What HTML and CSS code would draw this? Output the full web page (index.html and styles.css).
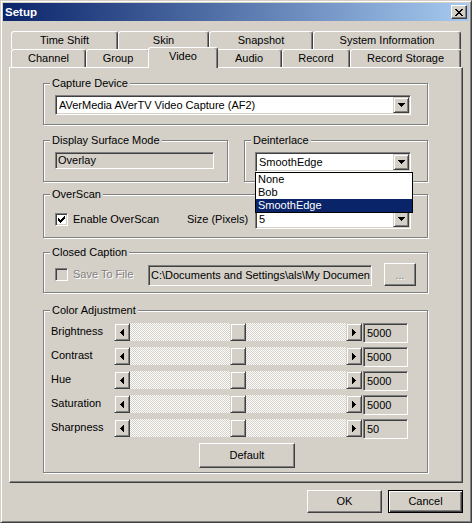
FILE: index.html
```html
<!DOCTYPE html>
<html>
<head>
<meta charset="utf-8">
<title>Setup</title>
<link rel="stylesheet" href="styles.css">
</head>
<body>
<div class="window">
  <div class="titlebar">
    <span class="title">Setup</span>
    <span class="close"><svg width="8" height="7" viewBox="0 0 8 7"><path d="M0 0h2v1H0zM6 0h2v1H6zM1 1h2v1H1zM5 1h2v1H5zM2 2h4v1H2zM3 3h2v1H3zM2 4h4v1H2zM1 5h2v1H1zM5 5h2v1H5zM0 6h2v1H0zM6 6h2v1H6z"/></svg></span>
  </div>

  <div class="tabs">
    <div class="tabrow">
      <div class="tab t-timeshift">Time Shift</div>
      <div class="tab t-skin">Skin</div>
      <div class="tab t-snapshot">Snapshot</div>
      <div class="tab t-sysinfo">System Information</div>
    </div>
    <div class="tabrow">
      <div class="tab t-channel">Channel</div>
      <div class="tab t-group">Group</div>
      <div class="tab t-video sel">Video</div>
      <div class="tab t-audio">Audio</div>
      <div class="tab t-record">Record</div>
      <div class="tab t-storage">Record Storage</div>
    </div>
  </div>

  <div class="panel">
    <div class="group g-capture">
      <div class="legend">Capture Device</div>
      <div class="combo sunk c-capture">
        <span class="ctext">AVerMedia AVerTV Video Capture (AF2)</span>
        <span class="dbtn raised"><svg width="7" height="4" viewBox="0 0 7 4"><path d="M0 0h7v1H0zM1 1h5v1H1zM2 2h3v1H2zM3 3h1v1H3z"/></svg></span>
      </div>
    </div>

    <div class="row2">
      <div class="group g-dsm">
        <div class="legend">Display Surface Mode</div>
        <div class="field sunk f-overlay">Overlay</div>
      </div>
      <div class="group g-deint">
        <div class="legend">Deinterlace</div>
        <div class="combo sunk c-deint">
          <span class="ctext">SmoothEdge</span>
          <span class="dbtn raised"><svg width="7" height="4" viewBox="0 0 7 4"><path d="M0 0h7v1H0zM1 1h5v1H1zM2 2h3v1H2zM3 3h1v1H3z"/></svg></span>
          <div class="list">
            <div class="item">None</div>
            <div class="item">Bob</div>
            <div class="item hl">SmoothEdge</div>
          </div>
        </div>
      </div>
    </div>

    <div class="group g-overscan">
      <div class="legend">OverScan</div>
      <div class="os-row">
        <label class="chk-label l-enable">
          <span class="chk sunk"><svg width="7" height="7" viewBox="0 0 7 7"><path d="M6 0h1v1H6zM5 1h2v1H5zM0 2h1v1H0zM4 2h3v1H4zM0 3h2v1H0zM3 3h3v1H3zM0 4h5v1H0zM1 5h3v1H1zM2 6h1v1H2z"/></svg></span>
          <span>Enable OverScan</span>
        </label>
        <span class="size-label">Size (Pixels)</span>
        <div class="combo sunk c-size">
          <span class="ctext">5</span>
          <span class="dbtn raised"><svg width="7" height="4" viewBox="0 0 7 4"><path d="M0 0h7v1H0zM1 1h5v1H1zM2 2h3v1H2zM3 3h1v1H3z"/></svg></span>
        </div>
      </div>
    </div>

    <div class="group g-cc">
      <div class="legend">Closed Caption</div>
      <div class="cc-row">
        <label class="chk-label l-save disabled">
          <span class="chk sunk off"></span>
          <span>Save To File</span>
        </label>
        <div class="field sunk f-path">C:\Documents and Settings\als\My Documen</div>
        <div class="btn b-browse disabled">...</div>
      </div>
    </div>

    <div class="group g-color">
      <div class="legend">Color Adjustment</div>
      <div class="sliders">
        <div class="srow">
          <span class="slabel">Brightness</span>
          <div class="sbar">
            <span class="sbtn raised"><svg width="4" height="7" viewBox="0 0 4 7"><path d="M3 0h1v7H3zM2 1h1v5H2zM1 2h1v3H1zM0 3h1v1H0z"/></svg></span>
            <span class="track"><span class="thumb raised"></span></span>
            <span class="sbtn raised"><svg width="4" height="7" viewBox="0 0 4 7"><path d="M0 0h1v7H0zM1 1h1v5H1zM2 2h1v3H2zM3 3h1v1H3z"/></svg></span>
          </div>
          <div class="field sunk val">5000</div>
        </div>
        <div class="srow">
          <span class="slabel">Contrast</span>
          <div class="sbar">
            <span class="sbtn raised"><svg width="4" height="7" viewBox="0 0 4 7"><path d="M3 0h1v7H3zM2 1h1v5H2zM1 2h1v3H1zM0 3h1v1H0z"/></svg></span>
            <span class="track"><span class="thumb raised"></span></span>
            <span class="sbtn raised"><svg width="4" height="7" viewBox="0 0 4 7"><path d="M0 0h1v7H0zM1 1h1v5H1zM2 2h1v3H2zM3 3h1v1H3z"/></svg></span>
          </div>
          <div class="field sunk val">5000</div>
        </div>
        <div class="srow">
          <span class="slabel">Hue</span>
          <div class="sbar">
            <span class="sbtn raised"><svg width="4" height="7" viewBox="0 0 4 7"><path d="M3 0h1v7H3zM2 1h1v5H2zM1 2h1v3H1zM0 3h1v1H0z"/></svg></span>
            <span class="track"><span class="thumb raised"></span></span>
            <span class="sbtn raised"><svg width="4" height="7" viewBox="0 0 4 7"><path d="M0 0h1v7H0zM1 1h1v5H1zM2 2h1v3H2zM3 3h1v1H3z"/></svg></span>
          </div>
          <div class="field sunk val">5000</div>
        </div>
        <div class="srow">
          <span class="slabel">Saturation</span>
          <div class="sbar">
            <span class="sbtn raised"><svg width="4" height="7" viewBox="0 0 4 7"><path d="M3 0h1v7H3zM2 1h1v5H2zM1 2h1v3H1zM0 3h1v1H0z"/></svg></span>
            <span class="track"><span class="thumb raised"></span></span>
            <span class="sbtn raised"><svg width="4" height="7" viewBox="0 0 4 7"><path d="M0 0h1v7H0zM1 1h1v5H1zM2 2h1v3H2zM3 3h1v1H3z"/></svg></span>
          </div>
          <div class="field sunk val">5000</div>
        </div>
        <div class="srow">
          <span class="slabel">Sharpness</span>
          <div class="sbar">
            <span class="sbtn raised"><svg width="4" height="7" viewBox="0 0 4 7"><path d="M3 0h1v7H3zM2 1h1v5H2zM1 2h1v3H1zM0 3h1v1H0z"/></svg></span>
            <span class="track"><span class="thumb raised"></span></span>
            <span class="sbtn raised"><svg width="4" height="7" viewBox="0 0 4 7"><path d="M0 0h1v7H0zM1 1h1v5H1zM2 2h1v3H2zM3 3h1v1H3z"/></svg></span>
          </div>
          <div class="field sunk val">50</div>
        </div>
      </div>
      <div class="btn b-default">Default</div>
    </div>
  </div>

  <div class="buttons">
    <div class="btn b-ok">OK</div>
    <div class="btn b-cancel">Cancel</div>
  </div>
</div>
</body>
</html>
```

FILE: styles.css
```css
* { box-sizing: border-box; }
html, body { margin: 0; padding: 0; }
body {
  width: 472px;
  height: 523px;
  overflow: hidden;
  background: #d4d0c8;
  font: 11px/13px "Liberation Sans", Arial, sans-serif;
  color: #000;
}

.window {
  width: 472px;
  height: 523px;
  padding: 2px;
  background: #d4d0c8;
  border: 1px solid;
  border-color: #d4d0c8 #404040 #404040 #d4d0c8;
  box-shadow: inset 1px 1px #fff, inset -1px -1px #808080;
}

/* title bar */
.titlebar {
  height: 18px;
  padding: 0 2px;
  display: flex;
  align-items: center;
  justify-content: space-between;
  background: linear-gradient(to right, #0a246a, #a6caf0);
}
.title {
  color: #fff;
  font-weight: bold;
  font-size: 11.5px;
}
.close {
  width: 16px;
  height: 14px;
  display: flex;
  align-items: center;
  justify-content: center;
  background: #d4d0c8;
  border: 1px solid;
  border-color: #fff #404040 #404040 #fff;
  box-shadow: inset -1px -1px #808080;
}
.close svg { display: block; }

/* tabs */
.tabs {
  width: 450px;
  margin: 10px 0 0 8px;
}
.tabrow {
  display: flex;
  height: 18px;
}
.tab {
  flex: none;
  height: 18px;
  padding-top: 1px;
  line-height: 15px;
  text-align: center;
  white-space: nowrap;
  background: #d4d0c8;
  border: 1px solid;
  border-bottom: 0;
  border-color: #fff #404040 transparent #fff;
  border-radius: 3px 3px 0 0;
  box-shadow: inset -1px 0 #808080;
}
.t-timeshift { width: 107px; }
.t-skin { width: 91px; }
.t-snapshot { width: 104px; }
.t-sysinfo { width: 148px; }
.t-channel { width: 75px; }
.t-group { width: 64px; }
.t-video { width: 66px; }
.t-audio { width: 66px; }
.t-record { width: 68px; }
.t-storage { width: 111px; }
.tab.sel {
  width: 70px;
  height: 21px;
  margin: -2px -2px -1px;
  position: relative;
  z-index: 2;
}

/* panel */
.panel {
  width: 454px;
  height: 416px;
  margin-left: 6px;
  padding-left: 33px;
  border: 1px solid;
  border-color: #fff #404040 #404040 #fff;
  box-shadow: inset -1px -1px #808080;
}

/* group boxes */
.group {
  width: 385px;
  padding: 0 11px;
  border: 1px solid #808080;
  box-shadow: inset 1px 1px #fff, 1px 1px #fff;
}
.legend {
  width: max-content;
  margin: -7px 0 0 -5px;
  padding: 0 2px;
  line-height: 13px;
  background: #d4d0c8;
}

/* 3D styles */
.sunk {
  border: 1px solid;
  border-color: #808080 #fff #fff #808080;
  box-shadow: inset 1px 1px #404040, inset -1px -1px #d4d0c8;
}
.raised {
  background: #d4d0c8;
  border: 1px solid;
  border-color: #d4d0c8 #404040 #404040 #d4d0c8;
  box-shadow: inset 1px 1px #fff, inset -1px -1px #808080;
}

/* combo */
.combo {
  height: 20px;
  padding: 1px 1px 1px 1px;
  display: flex;
  align-items: center;
  background: #fff;
  position: relative;
}
.ctext {
  flex: 1;
  padding-left: 2px;
  white-space: nowrap;
  overflow: hidden;
}
.dbtn {
  flex: none;
  width: 16px;
  height: 16px;
  display: flex;
  align-items: center;
  justify-content: center;
}
.dbtn svg { display: block; }

.list {
  position: absolute;
  left: -1px;
  top: 19px;
  width: 158px;
  background: #fff;
  border: 1px solid #000;
  z-index: 5;
}
.item {
  height: 13px;
  line-height: 13px;
  padding-left: 2px;
}
.item.hl {
  background: #0a246a;
  color: #fff;
}

.field {
  background: #d4d0c8;
  padding-left: 2px;
  white-space: nowrap;
  overflow: hidden;
  display: flex;
  align-items: center;
}

/* capture device */
.g-capture {
  height: 42px;
  margin-top: 15px;
}
.c-capture {
  width: 356px;
  margin-top: 5px;
}

/* display surface / deinterlace */
.row2 {
  display: flex;
  gap: 16px;
  margin-top: 15px;
}
.g-dsm {
  width: 185px;
  height: 42px;
}
.f-overlay {
  width: 159px;
  height: 17px;
  margin-top: 5px;
}
.g-deint {
  width: 184px;
  height: 42px;
  padding-left: 10px;
}
.g-deint .legend { margin-left: -4px; }
.c-deint {
  width: 156px;
  margin-top: 5px;
}

/* overscan */
.g-overscan {
  height: 44px;
  margin-top: 12px;
}
.os-row {
  height: 20px;
  margin-top: 8px;
  display: flex;
  align-items: center;
}
.chk-label {
  flex: none;
  display: flex;
  align-items: center;
}
.l-enable { width: 132px; }
.chk {
  flex: none;
  width: 13px;
  height: 13px;
  margin-right: 5px;
  background: #fff;
  display: flex;
  align-items: center;
  justify-content: center;
}
.chk svg { display: block; }
.chk.off { background: #d4d0c8; }
.size-label {
  flex: none;
  width: 68px;
}
.c-size { width: 156px; }

/* closed caption */
.g-cc {
  height: 41px;
  margin-top: 14px;
}
.cc-row {
  height: 24px;
  margin-top: 3px;
  display: flex;
  align-items: center;
}
.l-save { width: 93px; }
.disabled {
  color: #808080;
  text-shadow: 1px 1px #fff;
}
.f-path {
  width: 225px;
  height: 21px;
  margin-top: 2px;
}

/* buttons */
.btn {
  display: flex;
  align-items: center;
  justify-content: center;
  background: #d4d0c8;
  border: 1px solid;
  border-color: #fff #404040 #404040 #fff;
  box-shadow: inset -1px -1px #808080;
}
.b-browse {
  width: 32px;
  height: 23px;
  margin-left: 12px;
  padding-top: 3px;
}

/* color adjustment */
.g-color {
  height: 163px;
  margin-top: 17px;
  padding-left: 7px;
}
.g-color .legend { margin-left: -1px; }
.sliders {
  margin-top: 6px;
  display: flex;
  flex-direction: column;
  gap: 4px;
}
.srow {
  height: 20px;
  display: flex;
  align-items: flex-start;
}
.slabel {
  flex: none;
  width: 63px;
  line-height: 16px;
}
.sbar {
  flex: none;
  display: flex;
  height: 18px;
}
.sbtn {
  width: 16px;
  height: 18px;
  display: flex;
  align-items: center;
  justify-content: center;
}
.sbtn svg { display: block; }
.track {
  width: 216px;
  height: 18px;
  display: flex;
  justify-content: center;
  background: repeating-conic-gradient(#d4d0c8 0 25%, #fff 0 50%) 0 0 / 2px 2px;
}
.thumb {
  width: 16px;
  height: 18px;
}
.val {
  width: 45px;
  height: 20px;
  margin-left: 1px;
  padding-left: 3px;
}
.b-default {
  width: 96px;
  height: 25px;
  margin: 4px 0 0 148px;
}

.buttons {
  width: 454px;
  margin: 7px 0 0 6px;
  display: flex;
  justify-content: flex-end;
  gap: 6px;
}
.b-ok, .b-cancel {
  width: 75px;
  height: 23px;
}
.b-cancel {
  border-color: #000;
  box-shadow: inset 1px 1px #fff, inset -1px -1px #404040, inset -2px -2px #808080;
}
```
